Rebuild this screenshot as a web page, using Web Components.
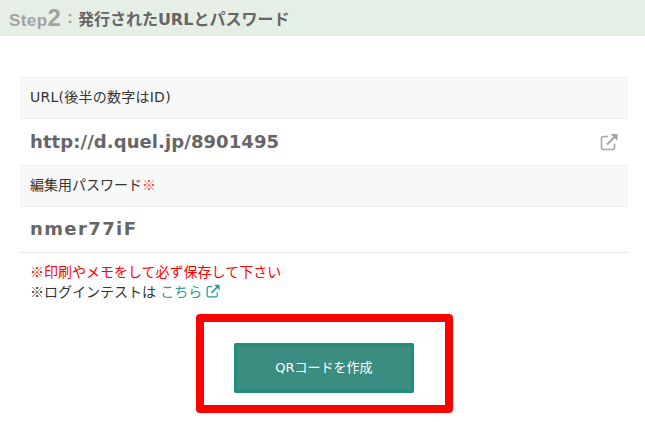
<!DOCTYPE html>
<html lang="ja">
<head>
<meta charset="utf-8">
<title>Step2</title>
<style>
  html, body { margin: 0; padding: 0; background: #fff; }
  body { font-family: "DejaVu Sans", "Noto Sans CJK JP", sans-serif; color: #333; height: 422px; overflow: hidden; }
</style>
</head>
<body>
<step-heading step="2">発行されたURLとパスワード</step-heading>

<info-table>
  <info-row label="URL(後半の数字はID)" value="http://d.quel.jp/8901495" link></info-row>
  <info-row label="編集用パスワード" value="nmer77iF" required spaced></info-row>
</info-table>

<save-note>ログインテストは</save-note>

<qr-action>QRコードを作成</qr-action>

<script>
  const cjk = '"Noto Sans CJK JP", sans-serif';
  const linkIcon = (size, color) => `
    <svg width="${size}" height="${size}" viewBox="0 0 18 18" fill="none" aria-hidden="true">
      <path d="M8 3.5H3.5a2 2 0 0 0-2 2v9a2 2 0 0 0 2 2h9a2 2 0 0 0 2-2V10.5" stroke="${color}" stroke-width="1.6"/>
      <path d="M7 11.5 14.5 4" stroke="${color}" stroke-width="2.2"/>
      <path d="M10.5 1H17.5V8Z" fill="${color}"/>
    </svg>`;

  class StepHeading extends HTMLElement {
    connectedCallback() {
      this.attachShadow({ mode: 'open' });
      this.shadowRoot.innerHTML = `
        <style>
          :host { display: flex; align-items: center; height: 36px; padding-left: 9px; background: #e6efe6; font-weight: 700; }
          .step { color: #a3a3a3; font-size: 17px; font-family: "Liberation Sans", sans-serif; letter-spacing: .4px; }
          .num { font-size: 24px; }
          .sep { color: #a3a3a3; font-size: 17px; margin: 0 5px 0 6px; font-family: "Liberation Sans", sans-serif; }
          .title { color: #666; font-size: 16px; }
        </style>
        <span class="step">Step<span class="num">${this.getAttribute('step')}</span></span>
        <span class="sep">:</span>
        <span class="title"><slot></slot></span>
      `;
    }
  }
  customElements.define('step-heading', StepHeading);

  class InfoTable extends HTMLElement {
    connectedCallback() {
      this.attachShadow({ mode: 'open' });
      this.shadowRoot.innerHTML = `
        <style>
          :host { display: block; margin: 41px 17px 0 20px; border-bottom: 1px solid #e8e8e8; }
        </style>
        <slot></slot>
      `;
    }
  }
  customElements.define('info-table', InfoTable);

  class InfoRow extends HTMLElement {
    connectedCallback() {
      this.attachShadow({ mode: 'open' });
      const spaced = this.hasAttribute('spaced');
      const link = this.hasAttribute('link');
      this.shadowRoot.innerHTML = `
        <style>
          :host { display: block; }
          .label { display: flex; align-items: center; height: 40px; padding-left: 10px; background: #f8f8f8; border-top: 1px solid #ececec; border-bottom: 1px solid #ececec; font-size: 14px; color: #333; letter-spacing: ${link ? '.25px' : '0'}; }
          .label span { margin-top: -5px; }
          .req { color: #f33; font-family: ${cjk}; font-weight: 400; }
          .value { display: flex; align-items: center; justify-content: space-between; height: ${spaced ? 45 : 46}px; padding: 0 10px; font-weight: 700; font-size: 18px; color: #666; letter-spacing: ${spaced ? '1.4px' : '.08px'}; }
          .value span { margin-top: -2px; }
          svg { display: block; }
        </style>
        <div class="label"><span>${this.getAttribute('label')}${this.hasAttribute('required') ? '<b class="req">※</b>' : ''}</span></div>
        <div class="value"><span>${this.getAttribute('value')}</span>${link ? linkIcon(18, '#a6a6a6') : ''}</div>
      `;
    }
  }
  customElements.define('info-row', InfoRow);

  class SaveNote extends HTMLElement {
    connectedCallback() {
      this.attachShadow({ mode: 'open' });
      this.shadowRoot.innerHTML = `
        <style>
          :host { display: block; margin: 8px 0 0 30px; font: 14px/20px ${cjk}; color: #333; }
          .warn { color: #f00; }
          a { color: #2f9c8f; text-decoration: none; margin-left: 1px; display: inline-flex; align-items: center; gap: 4px; }
          svg { display: block; }
        </style>
        <div class="warn">※印刷やメモをして必ず保存して下さい</div>
        <div>※<slot></slot> <a href="#">こちら${linkIcon(14, '#2f9c8f')}</a></div>
      `;
    }
  }
  customElements.define('save-note', SaveNote);

  class QrAction extends HTMLElement {
    connectedCallback() {
      this.attachShadow({ mode: 'open' });
      this.shadowRoot.innerHTML = `
        <style>
          :host { display: flex; justify-content: flex-start; margin: 13px 0 0 196px; }
          .frame { display: block; border: 8px solid #f00; border-radius: 4px; padding: 21px 31px 12px 30px; }
          button { display: block; width: 180px; height: 50px; padding: 0 0 3px; background: #3a8d80; border: 3px solid #218c7d; border-radius: 2px; color: #fff; font: 13px "DejaVu Sans", ${cjk}; }
        </style>
        <div class="frame"><button type="button"><slot></slot></button></div>
      `;
    }
  }
  customElements.define('qr-action', QrAction);
</script>
</body>
</html>
